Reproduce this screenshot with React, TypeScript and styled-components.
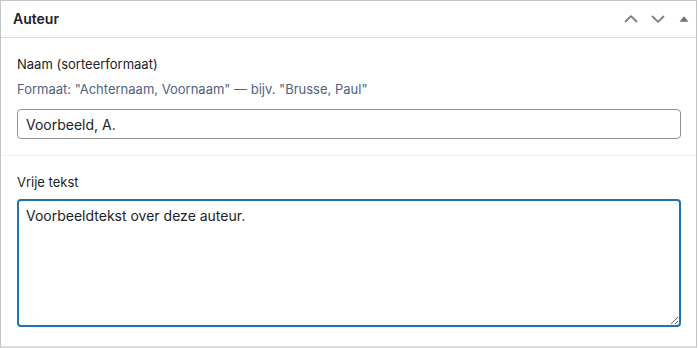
import React from "react";
import styled, { createGlobalStyle } from "styled-components";

const Global = createGlobalStyle`
  html, body { margin: 0; padding: 0; background: #ffffff; }
  body { font-family: Inter, "Open Sans", "Liberation Sans", sans-serif; color: #1d2327; }
  * { box-sizing: border-box; }
`;

const Box = styled.div`
  width: 697px;
  height: 348px;
  background: #fff;
  border: 1px solid #c3c4c7;
  border-bottom: 2px solid #dcdcde;
  display: flex;
  flex-direction: column;
`;

const Header = styled.div`
  height: 37px;
  flex: 0 0 auto;
  border-bottom: 1px solid #dcdcde;
  display: flex;
  align-items: center;
  padding: 0 0 0 12px;
`;

const Title = styled.h2`
  margin: 0;
  flex: 1 1 auto;
  font-size: 14px;
  font-weight: 600;
  color: #1d2327;
  line-height: 1.4;
`;

const Actions = styled.div`
  display: grid;
  grid-template-columns: 27px 27px 25px;
  align-items: center;
  height: 100%;
  flex: 0 0 auto;
`;

const IconButton = styled.button`
  height: 36px;
  padding: 0;
  margin: 0;
  border: 0;
  background: transparent;
  display: flex;
  align-items: center;
  justify-content: center;
  cursor: pointer;
  appearance: none;
`;

const Section = styled.div<{ $divider?: boolean }>`
  padding: 16px 16px 16px 16px;
  border-top: ${(p) => (p.$divider ? "1px solid #f0f0f1" : "0")};
  display: flex;
  flex-direction: column;
`;

const Label = styled.label<{ $mb: number }>`
  font-size: 13px;
  line-height: 20px;
  color: #1d2327;
  margin-bottom: ${(p) => p.$mb}px;
`;

const Description = styled.p`
  margin: 0 0 10px 0;
  font-size: 13px;
  line-height: 20px;
  color: #4f6280;
`;

const TextInput = styled.input`
  width: 664px;
  height: 30px;
  border: 1px solid #8c8f94;
  border-radius: 4px;
  padding: 0 8px;
  font-family: inherit;
  font-size: 14px;
  color: #1d2327;
  outline: none;
  background: #fff;
`;

const TextArea = styled.textarea`
  width: 664px;
  height: 128px;
  border: 2px solid #2271b1;
  border-radius: 4px;
  padding: 5px 7px;
  font-family: inherit;
  font-size: 14px;
  line-height: 20px;
  color: #1d2327;
  outline: none;
  resize: vertical;
  background: #fff;
`;

const Icon = ({ kind }: { kind: "up" | "down" | "toggle" }) => (
  <svg width="14" height="10" viewBox="0 0 14 10" fill="none">
    {kind === "toggle" ? (
      <path d="M2.5 7.8 L7 2.2 L11.5 7.8 Z" fill="#6e7277" />
    ) : (
      <path
        d={kind === "up" ? "M1.5 7.5 L7 2.2 L12.5 7.5" : "M1.5 2.5 L7 7.8 L12.5 2.5"}
        stroke="#787c82"
        strokeWidth="1.8"
        strokeLinecap="round"
        strokeLinejoin="round"
      />
    )}
  </svg>
);

export default function App() {
  return (
    <>
      <Global />
      <Box>
        <Header>
          <Title>Auteur</Title>
          <Actions>
            <IconButton aria-label="Omhoog">
              <Icon kind="up" />
            </IconButton>
            <IconButton aria-label="Omlaag">
              <Icon kind="down" />
            </IconButton>
            <IconButton aria-label="Inklappen">
              <Icon kind="toggle" />
            </IconButton>
          </Actions>
        </Header>
        <Section>
          <Label $mb={5}>Naam (sorteerformaat)</Label>
          <Description>Formaat: "Achternaam, Voornaam" — bijv. "Brusse, Paul"</Description>
          <TextInput defaultValue="Voorbeeld, A." />
        </Section>
        <Section $divider>
          <Label $mb={7}>Vrije tekst</Label>
          <TextArea defaultValue="Voorbeeldtekst over deze auteur." />
        </Section>
      </Box>
    </>
  );
}
